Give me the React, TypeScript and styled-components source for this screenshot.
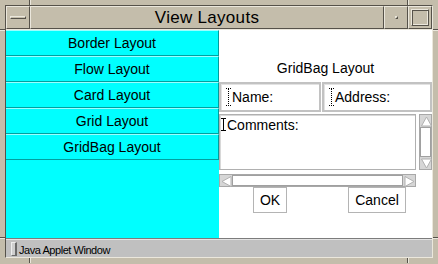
import React from "react";
import styled, { createGlobalStyle } from "styled-components";

const BEIGE = "#c4bdab";
const DARK = "#56524a";
const LIGHT = "#ebe7dc";

const Global = createGlobalStyle`
  html, body { margin: 0; padding: 0; background: ${BEIGE}; }
  body { width: 438px; height: 264px; overflow: hidden; font-family: "Liberation Sans", Arial, sans-serif; }
  * { box-sizing: border-box; }
`;

const Frame = styled.div`
  position: relative;
  width: 438px;
  height: 264px;
  background: ${BEIGE};
  padding: 5px 5px 6px 5px;
`;

const Notch = styled.div<{ $v?: boolean }>`
  position: absolute;
  ${(p) =>
    p.$v
      ? `width: 2px; height: 5px; border-left: 1px solid ${DARK}; border-right: 1px solid ${LIGHT};`
      : `width: 5px; height: 2px; border-top: 1px solid ${DARK}; border-bottom: 1px solid ${LIGHT};`}
`;

const Inner = styled.div`
  width: 100%;
  height: 100%;
  border-top: 1px solid ${DARK};
  border-left: 1px solid ${DARK};
  border-right: 1px solid ${LIGHT};
  border-bottom: 1px solid ${LIGHT};
  display: flex;
  flex-direction: column;
`;

const TitleBar = styled.div`
  height: 24px;
  display: flex;
  border-bottom: 1px solid ${LIGHT};
  flex: none;
`;

const TitleSection = styled.div<{ $w?: number }>`
  ${(p) => (p.$w ? `width: ${p.$w}px; flex: none;` : "flex: 1;")}
  height: 23px;
  background: ${BEIGE};
  border-top: 1px solid ${LIGHT};
  border-left: 1px solid ${LIGHT};
  border-right: 1px solid ${DARK};
  border-bottom: 1px solid ${DARK};
  display: flex;
  align-items: center;
  justify-content: center;
`;

const TitleText = styled.span`
  font-size: 17px;
  letter-spacing: 0.3px;
  color: #000;
  line-height: 20px;
  padding-top: 1px;
`;

const Dash = styled.div`
  width: 16px;
  height: 3px;
  background: ${BEIGE};
  border-top: 1px solid ${LIGHT};
  border-left: 1px solid ${LIGHT};
  border-right: 1px solid ${DARK};
  border-bottom: 1px solid ${DARK};
`;

const Dot = styled.div`
  width: 3px;
  height: 3px;
  border-top: 1px solid ${LIGHT};
  border-left: 1px solid ${LIGHT};
  border-right: 1px solid ${DARK};
  border-bottom: 1px solid ${DARK};
`;

const MaxBox = styled.div`
  width: 18px;
  height: 17px;
  border-top: 1px solid ${LIGHT};
  border-left: 1px solid ${LIGHT};
  border-right: 1px solid ${DARK};
  border-bottom: 1px solid ${DARK};
  box-shadow: inset 1px 1px 0 ${DARK}, inset -1px -1px 0 ${LIGHT};
`;

const Main = styled.div`
  height: 208px;
  display: flex;
  flex: none;
`;

const LeftPanel = styled.div`
  width: 213px;
  background: #00ffff;
  display: flex;
  flex-direction: column;
`;

const NavButton = styled.div`
  height: 26px;
  border-bottom: 1px solid #00a0a0;
  border-right: 1px solid #009c9c;
  border-top: 1px solid #9affff;
  display: flex;
  align-items: center;
  justify-content: center;
  font-size: 14px;
  color: #000;
`;

const RightPanel = styled.div`
  flex: 1;
  background: #fff;
  display: grid;
  grid-template-columns: 102px 1px 94px 16px;
  grid-template-rows: 52px 32px 60px 13px 26px;
  align-content: start;
`;

const PanelLabel = styled.div`
  grid-column: 1 / 5;
  align-self: end;
  margin-bottom: 6px;
  text-align: center;
  font-size: 14px;
  line-height: 16px;
  color: #000;
`;

const Field = styled.div<{ $col: string }>`
  grid-column: ${(p) => p.$col};
  height: 30px;
  border: 2px solid #c2c2c2;
  box-shadow: inset 1px 1px 0 #e2e2e2;
  display: flex;
  align-items: center;
  padding-left: 5px;
  gap: 1px;
  font-size: 14px;
  color: #000;
`;

const TextArea = styled.div`
  grid-column: 1 / 4;
  height: 56px;
  border: 1px solid #b0b0b0;
  box-shadow: inset 1px 1px 0 #d8d8d8;
  display: flex;
  align-items: flex-start;
  padding: 3px 0 0 1px;
  gap: 1px;
  font-size: 14px;
  line-height: 15px;
  color: #000;
`;

const VScroll = styled.div`
  grid-column: 4;
  margin-left: 3px;
  height: 56px;
  border: 1px solid #a8a8a8;
  background: #d6d6d6;
  display: flex;
  flex-direction: column;
`;

const HScroll = styled.div`
  grid-column: 1 / 4;
  height: 13px;
  border: 1px solid #a8a8a8;
  background: #d6d6d6;
  display: flex;
`;

const ArrowCell = styled.div`
  width: 12px;
  height: 12px;
  flex: none;
  display: flex;
  align-items: center;
  justify-content: center;
`;

const Track = styled.div`
  flex: 1;
  background: #fff;
  border: 1px solid #a0a0a0;
`;

const PushButton = styled.div<{ $col: string }>`
  grid-column: ${(p) => p.$col};
  justify-self: center;
  height: 26px;
  padding: 0 6px;
  border: 1px solid #b4b4b4;
  background: #fff;
  display: flex;
  align-items: center;
  justify-content: center;
  font-size: 14px;
  color: #000;
`;

const StatusBar = styled.div`
  flex: 1;
  background: #c0c0c0;
  border-top: 1px solid #7c7c7c;
  box-shadow: inset 0 1px 0 #e4e4e4;
  display: flex;
  align-items: center;
  padding: 2px 0 0 5px;
  gap: 2px;
`;

const Indicator = styled.div`
  width: 6px;
  height: 14px;
  background: #cfcfcf;
  border-top: 1px solid #eeeeee;
  border-left: 1px solid #eeeeee;
  border-right: 2px solid #6a6a6a;
  border-bottom: 1px solid #6a6a6a;
`;

const StatusText = styled.span`
  font-size: 11px;
  letter-spacing: -0.45px;
  color: #000;
  padding-top: 1px;
`;

const Cursor = ({ dotted, h }: { dotted?: boolean; h: number }) => (
  <svg width="5" height={h} viewBox={`0 0 5 ${h}`} style={{ flex: "none" }}>
    <line x1="0" y1="0.5" x2="5" y2="0.5" stroke="#000" strokeDasharray={dotted ? "1 1" : undefined} />
    <line x1="0" y1={h - 0.5} x2="5" y2={h - 0.5} stroke="#000" strokeDasharray={dotted ? "1 1" : undefined} />
    <line x1="2.5" y1="1" x2="2.5" y2={h - 1} stroke="#000" strokeDasharray={dotted ? "1 1" : undefined} />
  </svg>
);

type Dir = "up" | "down" | "left" | "right";
const Arrow = ({ dir }: { dir: Dir }) => {
  const pts: Record<Dir, string> = {
    up: "5.5,1 10.5,10 0.5,10",
    down: "0.5,1 10.5,1 5.5,10",
    left: "1,5.5 10,0.5 10,10.5",
    right: "1,0.5 10,5.5 1,10.5",
  };
  return (
    <svg width="11" height="11" viewBox="0 0 11 11">
      <polygon points={pts[dir]} fill="#ffffff" stroke="#b0b0b0" strokeWidth="1" />
    </svg>
  );
};

export default function App() {
  const items = ["Border Layout", "Flow Layout", "Card Layout", "Grid Layout", "GridBag Layout"];
  return (
    <>
      <Global />
      <Frame>
        <Notch $v style={{ left: 29, top: 0 }} />
        <Notch $v style={{ left: 407, top: 0 }} />
        <Notch $v style={{ left: 29, top: 258 }} />
        <Notch $v style={{ left: 407, top: 258 }} />
        <Notch style={{ left: 0, top: 29 }} />
        <Notch style={{ left: 0, top: 237 }} />
        <Notch style={{ left: 433, top: 29 }} />
        <Notch style={{ left: 433, top: 237 }} />
        <Inner>
          <TitleBar>
            <TitleSection $w={24}>
              <Dash />
            </TitleSection>
            <TitleSection>
              <TitleText>View Layouts</TitleText>
            </TitleSection>
            <TitleSection $w={24}>
              <Dot />
            </TitleSection>
            <TitleSection $w={24}>
              <MaxBox />
            </TitleSection>
          </TitleBar>
          <Main>
            <LeftPanel>
              {items.map((t) => (
                <NavButton key={t}>{t}</NavButton>
              ))}
            </LeftPanel>
            <RightPanel>
              <PanelLabel>GridBag Layout</PanelLabel>
              <Field $col="1">
                <Cursor dotted h={18} />
                <span>Name:</span>
              </Field>
              <Field $col="3 / 5">
                <Cursor dotted h={18} />
                <span>Address:</span>
              </Field>
              <TextArea>
                <Cursor h={13} />
                <span>Comments:</span>
              </TextArea>
              <VScroll>
                <ArrowCell>
                  <Arrow dir="up" />
                </ArrowCell>
                <Track />
                <ArrowCell>
                  <Arrow dir="down" />
                </ArrowCell>
              </VScroll>
              <HScroll>
                <ArrowCell>
                  <Arrow dir="left" />
                </ArrowCell>
                <Track />
                <ArrowCell>
                  <Arrow dir="right" />
                </ArrowCell>
              </HScroll>
              <PushButton $col="1">OK</PushButton>
              <PushButton $col="3 / 5">Cancel</PushButton>
            </RightPanel>
          </Main>
          <StatusBar>
            <Indicator />
            <StatusText>Java Applet Window</StatusText>
          </StatusBar>
        </Inner>
      </Frame>
    </>
  );
}
